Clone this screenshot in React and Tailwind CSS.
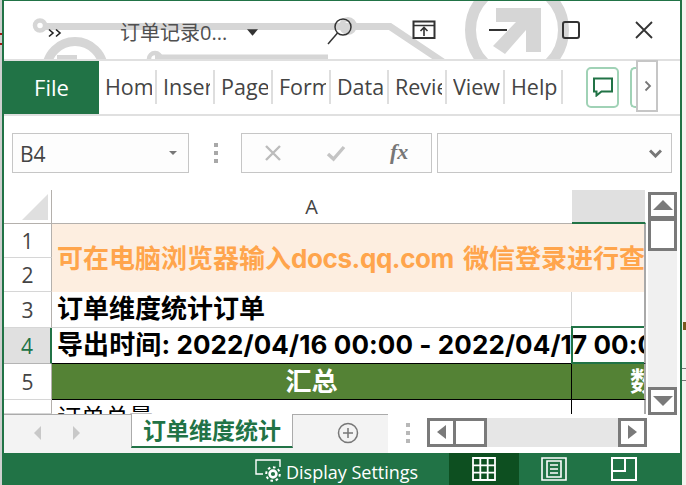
const ui = { fontFamily: '"Open Sans","Noto Sans CJK SC",sans-serif' };
const sheetFont = { fontFamily: 'Inter,"Noto Sans CJK SC",sans-serif' };

function Watermark() {
  return (
    <svg className="absolute left-0 top-0 pointer-events-none" width="678" height="58" viewBox="4 1 678 58" fill="none">
      <g stroke="#d6d6d6" strokeWidth="7">
        <path d="M44 26.5H390L446 64" />
        <circle cx="40" cy="25.5" r="5" strokeWidth="4.5" />
        <circle cx="348" cy="26" r="6.5" strokeWidth="5" />
        <path d="M155 58H328" />
        <circle cx="155" cy="59" r="6" strokeWidth="4.5" />
        <circle cx="75" cy="70" r="28.5" strokeWidth="9" />
        <circle cx="517" cy="30" r="46.5" strokeWidth="11" />
      </g>
      <rect x="57" y="55" width="20" height="6" fill="#d6d6d6" />
      <path d="M496 8H541V52H526V30L505 54L493 46L516 22H496Z" fill="#d6d6d6" />
    </svg>
  );
}

function TitleBar() {
  return (
    <div className="relative h-[58px] pt-[1px] flex items-center bg-white text-[#444]" style={ui}>
      <Watermark />
      <svg className="relative ml-[44px] mb-[-6px]" width="14" height="12" viewBox="0 0 14 12" fill="none" stroke="#222" strokeWidth="1.6">
        <path d="M1 2.5L5 6L1 9.5M8 2.5L12 6L8 9.5" />
      </svg>
      <span className="relative ml-[58px] text-[20px] leading-none mb-[-5px] text-[#505050] w-[110px] whitespace-nowrap">订单记录0...</span>
      <svg className="relative ml-[17px] mb-[-4px]" width="11" height="7" viewBox="0 0 12 7"><path d="M0 0H12L6 7Z" fill="#333" /></svg>
      <svg className="relative ml-[69px] mb-[-2px]" width="26" height="28" viewBox="0 0 26 28" fill="none" stroke="#333" strokeWidth="1.5">
        <circle cx="16" cy="10" r="8" />
        <path d="M10.5 16L1 27" />
      </svg>
      <svg className="relative ml-[59px]" width="24" height="20" viewBox="0 0 24 20" fill="none" stroke="#333" strokeWidth="2">
        <path d="M1.5 1.5H22.5V18H1.5Z" />
        <path d="M1.5 5.5H22.5" strokeWidth="1.5" />
        <path d="M12 16V8M8.5 11L12 7.5L15.5 11" strokeWidth="1.6" />
      </svg>
      <span className="relative block ml-[53px] w-[18px] h-[2px] bg-[#333]" />
      <span className="relative block ml-[55px] w-[18px] h-[18px] rounded-[3px] border-2 border-[#333]" />
      <svg className="relative ml-[55px]" width="18" height="18" viewBox="0 0 18 18" fill="none" stroke="#333" strokeWidth="1.8">
        <path d="M1 1L17 17M17 1L1 17" />
      </svg>
    </div>
  );
}

const tabs = ["Home", "Insert", "Page", "Formula", "Data", "Review", "View", "Help"];

function Ribbon() {
  return (
    <div className="relative h-[54px] flex items-stretch bg-white border-t-2 border-b-2 border-[#e0e0e0] box-content" style={ui}>
      <div className="w-[95px] bg-[#217346] text-white text-[22px] flex items-center justify-center pt-[1px]">File</div>
      <div className="flex items-center">
        {tabs.map((t) => (
          <div key={t} className="w-[58px] h-[34px] border-r-2 border-[#dedede] pl-[6px] flex items-center">
            <span className="block w-[47px] overflow-hidden whitespace-nowrap text-[21.5px] leading-[36px] text-[#444]">{t}</span>
          </div>
        ))}
      </div>
      <div className="ml-[23px] mt-[6px] w-[33px] h-[41px] rounded-[5px] border-2 border-[#a0d2b6] flex items-center justify-center">
        <svg width="20" height="20" viewBox="0 0 20 20" fill="none" stroke="#217346" strokeWidth="2">
          <path d="M1 1.5H19V14.5H8.5L3.5 18.5V14.5H1Z" />
        </svg>
      </div>
      <div className="ml-[11px] mt-[6px] w-[6px] h-[41px] rounded-l-[5px] border-2 border-r-0 border-[#a0d2b6]" />
      <div className="w-[22px] h-[52px] -mt-px bg-white border-2 border-[#c6c6c6] flex items-center justify-center pl-[2px]">
        <svg width="8" height="12" viewBox="0 0 8 12" fill="none" stroke="#777" strokeWidth="1.8"><path d="M1.5 1.5L6 6L1.5 10.5" /></svg>
      </div>
    </div>
  );
}

function FormulaBar() {
  return (
    <div className="h-[74px] bg-white pl-[8px] pt-[17px] flex items-start" style={ui}>
      <div className="w-[177px] h-[40px] border border-[#c6c6c6] bg-[#fdfdfd] flex items-center justify-between pl-[7px] pr-[11px]">
        <span className="text-[21px] text-[#444] leading-none pt-[2px]">B4</span>
        <svg width="8" height="4" viewBox="0 0 10 5"><path d="M0 0H10L5 5Z" fill="#777" /></svg>
      </div>
      <div className="w-[52px] h-[40px] flex flex-col items-center justify-center gap-[4px] pl-[1px]">
        <span className="w-[4px] h-[4px] bg-[#a8a8a8]" />
        <span className="w-[4px] h-[4px] bg-[#a8a8a8]" />
        <span className="w-[4px] h-[4px] bg-[#a8a8a8]" />
      </div>
      <div className="w-[191px] h-[40px] border border-[#c6c6c6] bg-[#fdfdfd] flex items-center pl-[22px]">
        <svg width="18" height="18" viewBox="0 0 18 18" fill="none" stroke="#bcbcbc" strokeWidth="2.4"><path d="M2 2L16 16M16 2L2 16" /></svg>
        <svg className="ml-[44px]" width="20" height="18" viewBox="0 0 20 18" fill="none" stroke="#c4c4c4" strokeWidth="3.4"><path d="M2 10L7.5 15L18 3" /></svg>
        <span className="ml-[44px] text-[22px] leading-none italic font-bold text-[#777] mb-[2px]" style={{ fontFamily: '"Liberation Serif",serif' }}>fx</span>
      </div>
      <div className="ml-[5px] w-[235px] h-[40px] border border-[#c6c6c6] bg-[#fdfdfd] flex items-center justify-end pr-[9px]">
        <svg width="13" height="9" viewBox="0 0 13 9" fill="none" stroke="#777" strokeWidth="3"><path d="M1 1.5L6.5 7L12 1.5" /></svg>
      </div>
    </div>
  );
}

function RowHead({ n, active }) {
  return (
    <div className={`flex items-center justify-center text-[21px] leading-none pt-[3px] border-b ${active ? "bg-[#e0e0e0] text-[#217346] border-[#b4b4b4] border-r-2 border-r-[#217346]" : "bg-white text-[#444] border-[#d6d6d6] border-r border-r-[#b4b0ac]"}`} style={ui}>
      {n}
    </div>
  );
}

function ScrollBtn({ dir, cls }) {
  const d = { up: "M0 10L10 0L20 10Z", down: "M0 0H20L10 10Z" }[dir];
  return (
    <div className={`relative border-[3px] border-[#7a7a7a] bg-white flex items-center justify-center ${cls}`}>
      <svg width="20" height="10" viewBox="0 0 20 10"><path d={d} fill="#7a7a7a" /></svg>
    </div>
  );
}

function Sheet() {
  return (
    <div className="h-[224px] flex bg-white">
      <div className="relative w-[642px] h-[224px] overflow-hidden grid grid-cols-[48px_520px_74px] grid-rows-[34px_34px_34px_36px_36px_36px_14px] text-black" style={sheetFont}>
        <div className="bg-white border-b border-r border-[#b4b0ac] pl-[18px] pt-[4px]">
          <svg width="26" height="26" viewBox="0 0 26 26"><path d="M26 0V26H0Z" fill="#dfdfdf" /></svg>
        </div>
        <div className="bg-white border-b border-[#b4b0ac] flex items-center justify-center text-[20px] text-[#444] pt-[1px] pr-[1px]" style={ui}>A</div>
        <div className="bg-[#e0e0e0] border-b-2 border-[#217346] border-r border-r-white" />

        <RowHead n="1" />
        <div className="row-span-2 col-span-2 bg-[#fdeee0] overflow-hidden whitespace-nowrap flex items-center pl-[5px] pt-[2px] font-bold text-[#ffa54c] text-[26px] leading-none border-r-2 border-r-[#a9a9a9]">
          <span>可在电脑浏览器输入<span className="tracking-[-0.4px] mr-[3px]">docs.qq.com</span> 微信登录进行查</span>
        </div>
        <RowHead n="2" />

        <RowHead n="3" />
        <div className="border-b border-r border-[#d4d4d4] whitespace-nowrap flex items-center pl-[5px] font-bold text-[26px] leading-none">订单维度统计订单</div>
        <div className="border-b border-[#d4d4d4] border-r-2 border-r-[#a9a9a9]" />

        <RowHead n="4" active />
        <div className="whitespace-nowrap flex items-center pl-[5px] font-bold text-[26px] leading-none tracking-[0.1px] border-b border-black">导出时间: 2022/04/16 00:00 - 2022/04/17 00:00</div>
        <div className="relative border-b border-black border-r-2 border-r-[#a9a9a9]">
          <div className="absolute left-[-1px] top-[-2px] right-0 bottom-[-1px] border-2 border-r-0 border-[#217346]" />
        </div>

        <RowHead n="5" />
        <div className="bg-[#548235] border-b border-r border-black flex items-center justify-center pt-[2px] font-bold text-white text-[26px] leading-none">汇总</div>
        <div className="bg-[#548235] border-b border-black border-r-2 border-r-[#a9a9a9] overflow-hidden flex items-center pl-[58px] pt-[2px] font-bold text-white text-[26px] leading-none whitespace-nowrap">数</div>

        <RowHead n="" />
        <div className="border-r border-black overflow-hidden pl-[5px] pt-[6px] text-[24px] leading-none whitespace-nowrap">订单总量</div>
        <div className="border-r-2 border-r-[#a9a9a9]" />
      </div>
      <div className="ml-[2px] w-[29px] h-[225px] flex flex-col z-10">
        <ScrollBtn dir="up" cls="h-[27px] mt-[2px]" />
        <div className="h-[33px] border-[3px] border-[#7a7a7a] -mt-px bg-white" />
        <div className="flex-1 bg-[#f0f0f0]" />
        <ScrollBtn dir="down" cls="h-[28px]" />
      </div>
    </div>
  );
}

function HArrow({ dir }) {
  return (
    <div className="w-[29px] h-[29px] border-[3px] border-[#7a7a7a] bg-white flex items-center justify-center">
      <svg width="9" height="14" viewBox="0 0 9 14"><path d={dir === "l" ? "M9 0V14L0 7Z" : "M0 0V14L9 7Z"} fill="#7a7a7a" /></svg>
    </div>
  );
}

function TabBar() {
  return (
    <div className="h-[39px] flex bg-white" style={ui}>
      <div className="w-[384px] h-[39px] flex items-start bg-[#f3f3f3] border-t border-[#ababab]">
        <svg className="ml-[30px] mt-[11px]" width="7" height="14" viewBox="0 0 7 14"><path d="M7 0V14L0 7Z" fill="#c8c8c8" /></svg>
        <svg className="ml-[32px] mt-[11px]" width="7" height="14" viewBox="0 0 7 14"><path d="M0 0V14L7 7Z" fill="#c8c8c8" /></svg>
        <div className="ml-[51px] -mt-px w-[162px] h-[34px] bg-white border-x border-[#ababab] border-b-2 border-b-[#217346] flex items-center justify-center text-[23px] font-bold text-[#217346] leading-none" style={{ fontFamily: '"Noto Sans CJK SC",sans-serif' }}>订单维度统计</div>
        <svg className="ml-[44px] mt-[7px]" width="22" height="22" viewBox="0 0 22 22" fill="none" stroke="#777" strokeWidth="1.5">
          <circle cx="11" cy="11" r="9.5" />
          <path d="M6 11H16M11 6V16" />
        </svg>
      </div>
      <div className="w-[39px] flex flex-col items-center gap-[4px] pt-[9px]">
        <span className="w-[4px] h-[4px] bg-[#b8b8b8]" />
        <span className="w-[4px] h-[4px] bg-[#b8b8b8]" />
        <span className="w-[4px] h-[4px] bg-[#b8b8b8]" />
      </div>
      <div className="w-[220px] h-[29px] mt-[4px] flex bg-[#e6e6e6]">
        <HArrow dir="l" />
        <div className="w-[31px] h-[29px] border-[3px] border-l-0 border-[#7a7a7a] bg-white" />
        <div className="flex-1" />
        <HArrow dir="r" />
      </div>
    </div>
  );
}

function StatusBar() {
  return (
    <div className="h-[32px] bg-[#217346] flex items-stretch text-white" style={ui}>
      <svg className="ml-[251px] mt-[6px]" width="27" height="24" viewBox="0 0 27 24" fill="none" stroke="#fff" strokeWidth="1.4">
        <path d="M8 15H1V1H25V8" />
        <circle cx="18" cy="15" r="3.4" strokeWidth="2.6" />
        <circle cx="18" cy="15" r="6.8" strokeWidth="2" strokeDasharray="2.6 2.7" />
      </svg>
      <span className="ml-[4px] w-[163px] text-[18px] leading-[38px] whitespace-nowrap">Display Settings</span>
      <div className="w-[70px] bg-[#0d4f20] flex items-center justify-center">
        <svg width="24" height="24" viewBox="0 0 24 24" fill="none" stroke="#fff" strokeWidth="1.8">
          <path d="M1 1H23V23H1ZM8.3 1V23M15.7 1V23M1 8.3H23M1 15.7H23" />
        </svg>
      </div>
      <div className="w-[70px] flex items-center justify-center">
        <svg width="26" height="24" viewBox="0 0 26 24" fill="none" stroke="#fff" strokeWidth="1.6">
          <path d="M1 1H25V23H1ZM6 4H20V20H6ZM9 8H17M9 12H17M9 16H17" />
        </svg>
      </div>
      <div className="w-[70px] flex items-center justify-center">
        <svg width="26" height="24" viewBox="0 0 26 24" fill="none" stroke="#fff" strokeWidth="2">
          <path d="M1 1H25V23H1ZM1 14H14V1" />
        </svg>
      </div>
    </div>
  );
}

export default function App() {
  return (
    <div className="relative w-[686px] h-[485px] overflow-hidden flex bg-[#f4f2ee]">
      <div className="relative w-[2px] bg-[#cfcfcf]">
        <span className="absolute left-0 top-[33px] w-[2px] h-[2px] bg-[#a01818]" />
        <span className="absolute left-0 top-[43px] w-[2px] h-[2px] bg-[#a01818]" />
      </div>
      <div className="w-[680px] h-[485px] flex flex-col border-x-2 border-t-[1px] border-[#217346] bg-white">
        <TitleBar />
        <Ribbon />
        <FormulaBar />
        <Sheet />
        <TabBar />
        <StatusBar />
      </div>
      <div className="relative w-[4px]">
        <span className="absolute left-[1px] top-[322px] w-[3px] h-[8px] bg-[#7a5a20]" />
        <span className="absolute left-0 top-[368px] w-[4px] h-[1px] bg-[#777]" />
        <span className="absolute left-0 top-[380px] w-[4px] h-[1px] bg-[#777]" />
      </div>
    </div>
  );
}
